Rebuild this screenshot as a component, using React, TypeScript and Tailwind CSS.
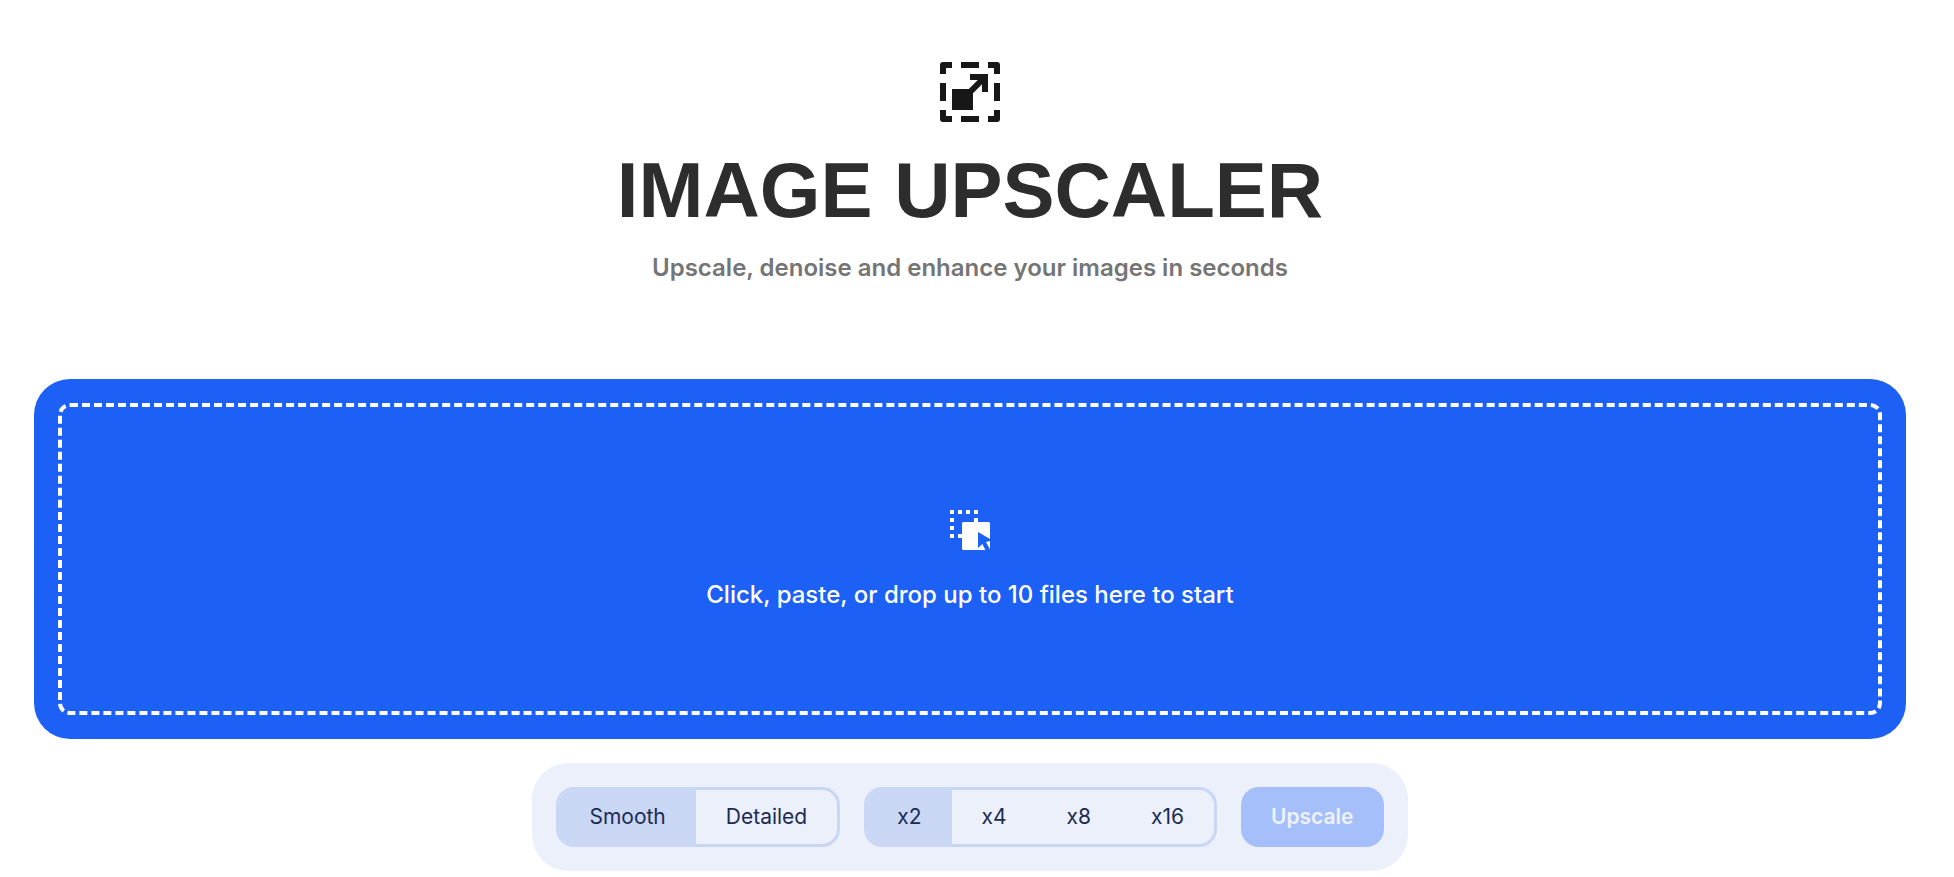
import { useState } from "react";

function UpscaleIcon() {
  return (
    <svg viewBox="0 0 60 60" className="size-[60px] text-[#171717]" fill="currentColor" aria-hidden="true">
      <path d="M3 0H12V6H6V12H0V3A3 3 0 0 1 3 0ZM21 0H39V6H21ZM48 0H57A3 3 0 0 1 60 3V12H54V6H48ZM54 21H60V39H54ZM54 48H60V57A3 3 0 0 1 57 60H48V54H54ZM21 54H39V60H21ZM0 48H6V54H12V60H3A3 3 0 0 1 0 57ZM0 21H6V39H0Z" />
      <path d="M30 12H48V30H42V22.2L33 31.2V48H12V27H28.8L37.8 18H30Z" />
    </svg>
  );
}

function DropIcon() {
  return (
    <svg viewBox="0 0 40 40" className="size-10 text-white" fill="currentColor" aria-hidden="true">
      <path d="M0 0H4V4H0ZM8 0H12V4H8ZM16 0H20V4H16ZM24 0H28V4H24ZM0 8H4V12H0ZM0 16H4V20H0ZM0 24H4V28H0ZM8 24H12V28H8ZM24 8H28V12H24Z" />
      <path d="M13.5 12H38.5A1.5 1.5 0 0 1 40 13.5V29L28 22V38L32.4 34L35.4 40H13.5A1.5 1.5 0 0 1 12 38.5V13.5A1.5 1.5 0 0 1 13.5 12Z" />
      <path d="M36 32L40 31V39.4Z" />
    </svg>
  );
}

type SegmentedProps = {
  label: string;
  options: string[];
  value: string;
  onChange: (value: string) => void;
};

function Segmented({ label, options, value, onChange }: SegmentedProps) {
  return (
    <div
      role="group"
      aria-label={label}
      className="flex h-[60px] overflow-hidden rounded-[18px] border-3 border-[#c9d7f5]"
    >
      {options.map((option) => (
        <button
          key={option}
          type="button"
          aria-pressed={option === value}
          onClick={() => onChange(option)}
          className={option === value ? "bg-[#c9d7f5] px-[30px]" : "px-[30px]"}
        >
          {option}
        </button>
      ))}
    </div>
  );
}

export default function App() {
  const [mode, setMode] = useState("Smooth");
  const [scale, setScale] = useState("x2");

  return (
    <main className="flex flex-col items-center bg-white pt-[62px] pr-12 pb-[6px] pl-[34px] font-['Inter',sans-serif]">
      <UpscaleIcon />
      <h1 className="mt-6 font-['Liberation_Sans',sans-serif] text-[78px] leading-[88px] font-bold text-[#2d2d2d]">
        IMAGE UPSCALER
      </h1>
      <p className="mt-4 text-2xl leading-9 font-semibold text-[#757575]">
        Upscale, denoise and enhance your images in seconds
      </p>
      <button
        type="button"
        className="mt-[93px] flex h-[360px] w-full rounded-[36px] bg-[#1d60f6] p-6"
      >
        <span className="flex h-full w-full flex-col items-center justify-center gap-[27px] rounded-xl border-4 border-dashed border-white pt-[5px] text-2xl leading-9 font-medium text-white">
          <DropIcon />
          Click, paste, or drop up to 10 files here to start
        </span>
      </button>
      <div className="mt-6 flex gap-6 rounded-[36px] bg-[#ecf0fb] p-6 text-[21px] text-[#1c2b54]">
        <Segmented label="Mode" options={["Smooth", "Detailed"]} value={mode} onChange={setMode} />
        <Segmented label="Scale" options={["x2", "x4", "x8", "x16"]} value={scale} onChange={setScale} />
        <button
          type="button"
          disabled
          className="h-[60px] rounded-[18px] bg-[#a5bffb] px-[30px] font-semibold text-[#edf2fe]"
        >
          Upscale
        </button>
      </div>
    </main>
  );
}
